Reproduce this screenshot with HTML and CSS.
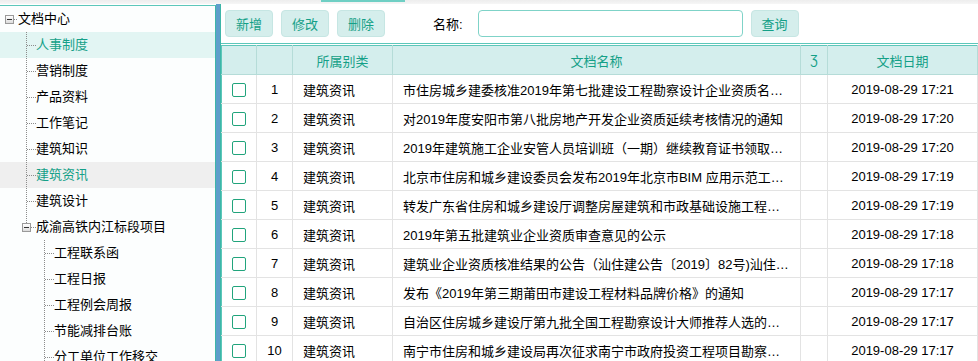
FILE: index.html
```html
<!DOCTYPE html>
<html lang="zh-CN">
<head>
  <meta charset="UTF-8" />
  <title>文档中心</title>
  <link rel="stylesheet" href="styles.css">
</head>
<body>
  <div class="topbar"><span class="tab-line"></span></div>
  <div class="main">
    <!-- Document tree -->
    <div class="tree">
      <div class="node"><span class="ind root-ind"><i class="toggle"></i></span><span class="label">文档中心</span></div>
      <div class="node active"><span class="ind"></span><span class="ind join"></span><span class="label">人事制度</span></div>
      <div class="node"><span class="ind"></span><span class="ind join"></span><span class="label">营销制度</span></div>
      <div class="node"><span class="ind"></span><span class="ind join"></span><span class="label">产品资料</span></div>
      <div class="node"><span class="ind"></span><span class="ind join"></span><span class="label">工作笔记</span></div>
      <div class="node"><span class="ind"></span><span class="ind join"></span><span class="label">建筑知识</span></div>
      <div class="node selected"><span class="ind"></span><span class="ind join"></span><span class="label">建筑资讯</span></div>
      <div class="node"><span class="ind"></span><span class="ind join"></span><span class="label">建筑设计</span></div>
      <div class="node"><span class="ind"></span><span class="ind last"><i class="toggle"></i></span><span class="label">成渝高铁内江标段项目</span></div>
      <div class="node"><span class="ind"></span><span class="ind"></span><span class="ind join"></span><span class="label">工程联系函</span></div>
      <div class="node"><span class="ind"></span><span class="ind"></span><span class="ind join"></span><span class="label">工程日报</span></div>
      <div class="node"><span class="ind"></span><span class="ind"></span><span class="ind join"></span><span class="label">工程例会周报</span></div>
      <div class="node"><span class="ind"></span><span class="ind"></span><span class="ind join"></span><span class="label">节能减排台账</span></div>
      <div class="node"><span class="ind"></span><span class="ind"></span><span class="ind join"></span><span class="label">分工单位工作移交</span></div>
    </div>

    <div class="splitter"></div>

    <!-- Document list -->
    <div class="content">
      <div class="toolbar">
        <button class="btn">新增</button>
        <button class="btn">修改</button>
        <button class="btn">删除</button>
        <label class="search-label">名称:</label>
        <input class="search-input" type="text" />
        <button class="btn">查询</button>
      </div>

      <div class="grid-wrap">
        <table class="grid">
          <colgroup>
            <col class="c-check"><col class="c-num"><col class="c-cat"><col class="c-title"><col class="c-narrow"><col class="c-date">
          </colgroup>
          <thead>
            <tr>
              <th></th>
              <th></th>
              <th>所属别类</th>
              <th>文档名称</th>
              <th class="narrow">Ʒ</th>
              <th>文档日期</th>
            </tr>
          </thead>
          <tbody>
            <tr><td><span class="check"></span></td><td class="num">1</td><td>建筑资讯</td><td class="title">市住房城乡建委核准2019年第七批建设工程勘察设计企业资质名单的公告</td><td></td><td class="date">2019-08-29 17:21</td></tr>
            <tr><td><span class="check"></span></td><td class="num">2</td><td>建筑资讯</td><td class="title">对2019年度安阳市第八批房地产开发企业资质延续考核情况的通知</td><td></td><td class="date">2019-08-29 17:20</td></tr>
            <tr><td><span class="check"></span></td><td class="num">3</td><td>建筑资讯</td><td class="title">2019年建筑施工企业安管人员培训班（一期）继续教育证书领取的通知</td><td></td><td class="date">2019-08-29 17:20</td></tr>
            <tr><td><span class="check"></span></td><td class="num">4</td><td>建筑资讯</td><td class="title">北京市住房和城乡建设委员会发布2019年北京市BIM 应用示范工程的通知</td><td></td><td class="date">2019-08-29 17:19</td></tr>
            <tr><td><span class="check"></span></td><td class="num">5</td><td>建筑资讯</td><td class="title">转发广东省住房和城乡建设厅调整房屋建筑和市政基础设施工程施工图审查范围的通知</td><td></td><td class="date">2019-08-29 17:19</td></tr>
            <tr><td><span class="check"></span></td><td class="num">6</td><td>建筑资讯</td><td class="title">2019年第五批建筑业企业资质审查意见的公示</td><td></td><td class="date">2019-08-29 17:18</td></tr>
            <tr><td><span class="check"></span></td><td class="num">7</td><td>建筑资讯</td><td class="title">建筑业企业资质核准结果的公告（汕住建公告〔2019〕82号)汕住建公告</td><td></td><td class="date">2019-08-29 17:18</td></tr>
            <tr><td><span class="check"></span></td><td class="num">8</td><td>建筑资讯</td><td class="title">发布《2019年第三期莆田市建设工程材料品牌价格》的通知</td><td></td><td class="date">2019-08-29 17:17</td></tr>
            <tr><td><span class="check"></span></td><td class="num">9</td><td>建筑资讯</td><td class="title">自治区住房城乡建设厅第九批全国工程勘察设计大师推荐人选的公示</td><td></td><td class="date">2019-08-29 17:17</td></tr>
            <tr><td><span class="check"></span></td><td class="num">10</td><td>建筑资讯</td><td class="title">南宁市住房和城乡建设局再次征求南宁市政府投资工程项目勘察设计意见</td><td></td><td class="date">2019-08-29 17:17</td></tr>
          </tbody>
        </table>
      </div>
    </div>
  </div>
</body>
</html>
```

FILE: styles.css
```css
html, body {
  margin: 0;
  height: 100%;
  overflow: hidden;
}
body {
  font-family: "Liberation Sans", "Noto Sans CJK SC", sans-serif;
  font-size: 13px;
  color: #000;
  background: #fff;
}
.topbar {
  height: 4px;
  background: linear-gradient(#ededed, #f6f6f6);
}
.tab-line {
  display: block;
  margin-left: 321px;
  width: 84px;
  height: 2px;
  background: #6fcfc4;
}
.main {
  display: flex;
  height: calc(100% - 4px);
}

/* tree */
.tree {
  width: 215px;
  margin-top: 1px;
  border-top: 1px solid #5cc7ba;
  border-right: 1px solid #3db6a8;
  background: #fcfefe;
  flex-shrink: 0;
}
.node {
  display: flex;
  align-items: center;
  height: 26px;
  white-space: nowrap;
}
.node.active {
  background: #e2f5f3;
  color: #15a088;
}
.node.selected {
  background: #efefef;
  color: #15a088;
}
.ind {
  display: flex;
  align-items: center;
  width: 18px;
  height: 26px;
  flex-shrink: 0;
}
.join {
  background:
    repeating-linear-gradient(to bottom, #8c8c8c 0 1px, transparent 1px 2px) 8px 0 / 1px 100% no-repeat,
    repeating-linear-gradient(to right, #8c8c8c 0 1px, transparent 1px 2px) 9px 13px / 9px 1px no-repeat;
}
.last {
  background:
    repeating-linear-gradient(to bottom, #8c8c8c 0 1px, transparent 1px 2px) 8px 0 / 1px 9px no-repeat,
    repeating-linear-gradient(to right, #8c8c8c 0 1px, transparent 1px 2px) 13px 13px / 5px 1px no-repeat;
}
.root-ind {
  background:
    repeating-linear-gradient(to right, #8c8c8c 0 1px, transparent 1px 2px) 14px 13px / 4px 1px no-repeat;
}
.toggle {
  display: flex;
  align-items: center;
  justify-content: center;
  box-sizing: border-box;
  width: 9px;
  height: 9px;
  margin-left: 4px;
  border: 1px solid #9a9a9a;
  background: linear-gradient(#ffffff, #dcdcdc);
}
.root-ind .toggle {
  margin-left: 5px;
}
.toggle::before {
  content: "";
  width: 5px;
  height: 1px;
  background: #333;
}
.label {
  line-height: 26px;
}

.splitter {
  width: 4px;
  flex-shrink: 0;
  background: #5f9ecb;
  border-right: 1px solid #3db6a8;
}

/* list */
.content {
  flex: 1;
  overflow: hidden;
}
.toolbar {
  display: flex;
  align-items: center;
  height: 39px;
  padding-left: 4px;
  box-sizing: border-box;
}
.btn {
  font-family: inherit;
  font-size: 13px;
  color: #14a087;
  width: 48px;
  height: 27px;
  margin-right: 8px;
  padding: 0;
  border: 1px solid #c6e6e3;
  border-radius: 4px;
  background: #d5eeec;
}
.search-label {
  margin-left: 40px;
  margin-right: 15px;
}
.search-input {
  width: 265px;
  height: 27px;
  box-sizing: border-box;
  margin-right: 8px;
  border: 1px solid #7fd3c8;
  border-radius: 4px;
  background: #fff;
}
.grid-wrap {
  border-top: 1px solid #5cc7ba;
  padding-top: 1px;
}
.grid {
  table-layout: fixed;
  border-collapse: collapse;
  width: 757px;
  border-top: 1px solid #5cc7ba;
  border-left: 1px solid #5cc7ba;
}
.c-check { width: 35px; }
.c-num { width: 36px; }
.c-cat { width: 100px; }
.c-title { width: 408px; }
.c-narrow { width: 27px; }
.c-date { width: 150px; }
th {
  height: 28px;
  padding: 0;
  font-weight: normal;
  color: #14a087;
  background: #d4eeed;
  border-right: 1px solid #b5dcd8;
  border-bottom: 1px solid #b5dcd8;
  text-align: center;
}
th.narrow {
  font-size: 12px;
}
td {
  height: 28px;
  padding: 0 10px;
  border-right: 1px solid #e3e3e3;
  border-bottom: 1px solid #e3e3e3;
  white-space: nowrap;
  overflow: hidden;
  text-overflow: ellipsis;
}
td:first-child {
  padding: 0;
  text-align: center;
}
.check {
  display: inline-block;
  vertical-align: middle;
  box-sizing: border-box;
  width: 14px;
  height: 14px;
  border: 1px solid #21a47c;
  border-radius: 2px;
}
td.num {
  padding: 0;
  text-align: center;
}
td.date {
  text-align: center;
  padding: 0;
}
```
